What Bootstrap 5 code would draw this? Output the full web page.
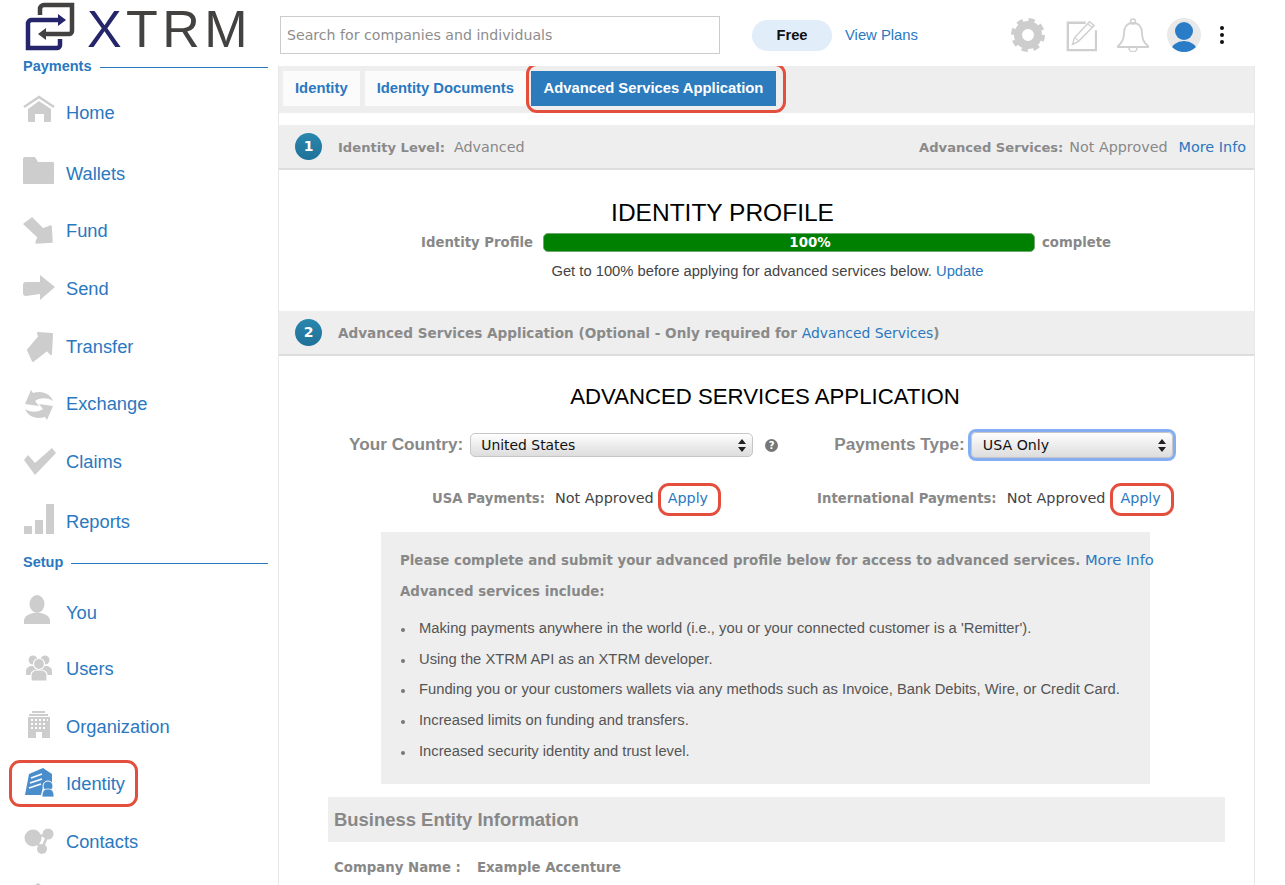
<!DOCTYPE html>
<html lang="en">
<head>
<meta charset="utf-8">
<title>XTRM Identity</title>
<link href="https://cdn.jsdelivr.net/npm/bootstrap@5.3.0/dist/css/bootstrap.min.css" rel="stylesheet">
<style>
html,body{height:885px;overflow:hidden;background:#fff}
body{font-family:"Liberation Sans",Arial,sans-serif;color:#333;font-size:14.7px}
a{text-decoration:none;color:#2a78bf}
.shell{height:885px;width:1285px;overflow:hidden}
.leftcol{width:278px;height:885px;overflow:hidden;flex:none;padding-left:23px;padding-right:10px}
.logo-box{height:58px;margin-left:2px}
.logo-box svg{display:block;flex:none}
.logo-word{font-family:"Liberation Sans",sans-serif;font-weight:400;font-size:52px;line-height:40px;height:40px;margin:9px 0 0 10px;letter-spacing:4.4px;color:#444240;white-space:nowrap}
.logo-word span{color:#24256b}
.sec-head{font-weight:700;font-size:14.5px;color:#2a78bf;line-height:16px;height:16px}
.sec-head i{flex:1;height:1px;background:#2a78bf;margin-left:8px;margin-top:2px;display:block}
.sec-setup{margin-top:0}
.nav-line{font-size:18.3px;line-height:34px;color:#2a78bf;position:relative}
.nav-line svg{width:34px;height:34px;margin-left:-2px;margin-right:11px;flex:none;overflow:visible;fill:#cdcdcd}
.rh-49{height:49px}.rh-56{height:56px}.rh-57{height:57px}.rh-58{height:58px}.rh-60{height:60px}.rh-61{height:61px}
.first-pay{margin-top:22px}.first-set{margin-top:26px}
.rightcol{width:978px;flex:none}
.topbar{height:66px;padding:4px 0 0 2px}
.searchbox{width:440px;height:38px;border:1px solid #ccc;border-radius:0;padding:0 6px;font-family:"DejaVu Sans",sans-serif;font-size:14.15px;color:#888;background:#fff}
.searchbox::placeholder{color:#8d8d8d;opacity:1}
.free-pill{width:80px;height:31px;background:#e1eefa;border-radius:16px;font-weight:700;font-size:14.7px;color:#111;margin-left:32px;padding:0}
.plans{font-size:14.8px;margin-left:13px}
.topicons{margin-left:93px}
.tp-a{margin-left:20px}.tp-b{margin-left:18px}
.mainpane{border-left:1px solid #e8e8e8;border-right:1px solid #e8e8e8;height:819px;overflow:hidden;width:977px}
.tabbar{background:#eee;height:47px;padding:5px 0 0 4px;gap:5px}
.tabbtn{height:35px;background:#fbfbfb;color:#2a78bf;font-weight:700;font-size:14.8px;padding:0 12px;line-height:35px;border:0;border-radius:0}
.tabbtn.on{background:#2c7bbd;color:#fff;position:relative;width:245px;text-align:center;padding:0}
.redmark{position:relative}
.redmark::after{content:"";position:absolute;border:3.5px solid #e34f3c;border-radius:11px;pointer-events:none}
.tabbtn.redmark::after{inset:-8px -10px -7px -5px}
.step-bar{background:#eee;height:45px;border-bottom:2px solid #ddd;margin-top:12px;padding:0 8px 0 16px;font-family:"DejaVu Sans",sans-serif;font-size:14.3px;color:#888;width:975px}
.step-bar>span:not(.step-no){padding-top:2px}
.step-no{width:27px;height:27px;border-radius:50%;background:linear-gradient(#2a86ae,#1f7299);color:#fff;font-weight:700;font-size:14px;margin-right:16px}
.step-bar b{font-weight:700;color:#8a8a8a;font-size:13.1px;margin-right:6px}
.step-bar b.lv{margin-right:9px}
.step-bar b.wide{font-size:13.6px;margin-right:0}
.step-bar b.wide a{font-weight:400;font-size:13.9px}
.step-bar .lnk{font-size:14.4px;margin-left:11px}
.ttl{line-height:28px;color:#000;text-align:center;margin:0;font-weight:400}
.ttl-a{font-size:24.5px;margin-top:29px;width:887px}
.ttl-b{font-size:22.2px;margin-top:27px;width:972px}
.prow{width:975px;height:20px;margin-top:5px;font-family:"DejaVu Sans",sans-serif;font-size:13.25px;color:#888;font-weight:700}
.prow>span{padding-top:2px}
.prow .lab{width:254px;text-align:right;margin-right:10px}
.bar-track{width:492px;height:19px;background:green;border:1px solid #6fa96f;border-radius:5px;color:#fff;font-size:13.4px;line-height:17px;text-align:center;padding-left:42px}
.prow .end{margin-left:7px}
.get-line{text-align:center;margin:8px 0 0;height:51px;line-height:22px;font-size:14.75px;width:977px;color:#444}
.ctl-row{height:50px;margin-top:9px}
.lbl{font-weight:700;font-size:17.2px;color:#888}
.lbl-a{margin-left:70px}.lbl-b{margin-left:56px}
.macsel{height:24px;padding:0 10px;border:1px solid #c6c6c6;border-radius:5px;font-family:"DejaVu Sans",sans-serif;font-size:14.2px;color:#111;line-height:22px;box-shadow:none;background-color:#f2f2f2;background-image:url("data:image/svg+xml,%3Csvg xmlns='http://www.w3.org/2000/svg' width='8' height='13'%3E%3Cpath d='M4 0 8 5H0zM4 13 0 8h8z' fill='%23222'/%3E%3C/svg%3E"),linear-gradient(#fff,#f0f0f0 40%,#ddd);background-repeat:no-repeat;background-position:right 6px center,0 0;background-size:8px 13px,100% 100%}
.macsel:focus{box-shadow:none}
.macsel.cty{width:283px;margin-left:7px;font-size:13.9px}
.macsel.ptp{width:202px;height:26px;margin-left:6px;padding-left:11px;outline:3px solid #85aef2;outline-offset:0;border-radius:5px}
.qmark{width:13px;height:13px;border-radius:50%;background:#777;color:#fff;font-size:10px;font-weight:700;line-height:13px;text-align:center;margin-left:12px;font-family:"DejaVu Sans",sans-serif}
.pay-row{font-family:"DejaVu Sans",sans-serif;font-size:14.4px;color:#444;height:30px;margin-top:14px}
.pay-row b{color:#888;font-weight:700;margin-right:10px;font-size:13.2px}
.pay-row a{position:relative;margin-left:14px;font-size:14.3px}
.pay-row a.apply-b{margin-left:15px}
.pay-row a::after{inset:-5px -13px -6px -10px}
.pay-a{margin-left:153px}.pay-b{margin-left:109px}
.info-box{width:769px;height:252px;background:#eee;margin:18px 0 0 102px;padding:17px 0 0 19px;font-size:14.75px}
.info-box p{margin:0;font-family:"DejaVu Sans",sans-serif;font-weight:700;color:#888;font-size:13.35px;line-height:22px;height:32px;white-space:nowrap}
.info-box p a{font-weight:400;font-size:14.7px}
.info-box p.tall{height:33px}
.info-box ul{margin:4px 0 0;padding-left:15px;list-style:disc}
.info-box li{height:30.7px;line-height:20px;color:#555;padding-left:4px}
.info-box li::marker{font-size:12px;color:#777}
.biz-head{width:897px;height:45px;background:#eee;margin:13px 0 0 49px;padding-left:6px;font-weight:700;font-size:18.45px;color:#888;line-height:45px}
.co-line{margin:16px 0 0 55px;font-family:"DejaVu Sans",sans-serif;font-weight:700;color:#888;font-size:13.3px;line-height:20px}
.co-line span{margin-left:16px}
.nav-line.redmark::after{left:-14px;top:-7px;width:129px;height:47px}
.act-ico{fill:#4a8dcb !important}
</style>
</head>
<body>
<div class="shell d-flex">
  <aside class="leftcol">
    <div class="logo-box d-flex">
      <svg width="52" height="54" viewBox="0 0 52 54">
        <path d="M35 39v6a3 3 0 0 1-3 3H3V23a4 4 0 0 1 4-3H33" fill="none" stroke="#24256b" stroke-width="4.500"/>
        <path d="M33 14l8 6-8 6z" fill="#24256b"/>
        <path d="M15 15V9a4 4 0 0 1 4-4H47V31a3 3 0 0 1-3 3H20" fill="none" stroke="#444240" stroke-width="4.500"/>
        <path d="M21 28l-8 6 8 6z" fill="#444240"/>
      </svg>
      <div class="logo-word"><span>X</span>TRM</div>
    </div>
    <div class="sec-head d-flex align-items-center">Payments<i></i></div>
    <div class="nav-line d-flex rh-61 first-pay"><svg viewBox="0 0 34 34"><path d="M3 11 18 1l15 10" fill="none" stroke="#cdcdcd" stroke-width="2.500"/><path d="M7 13 18 5l12 8v12a1 1 0 0 1-1 1h-6v-8h-9v8H8a1 1 0 0 1-1-1z"/></svg>Home</div>
    <div class="nav-line d-flex rh-57"><svg viewBox="0 0 34 34"><path d="M2 2a2 2 0 0 1 2-2h10l3 5h15a1 1 0 0 1 1 1v20a1 1 0 0 1-1 1H3a1 1 0 0 1-1-1z"/></svg>Wallets</div>
    <div class="nav-line d-flex rh-58"><svg viewBox="0 0 34 34"><path d="M3 10l8-6 11 11 8-3 1 16-16 1 2-6z" stroke="#cdcdcd" stroke-width="1.500" stroke-linejoin="round"/></svg>Fund</div>
    <div class="nav-line d-flex rh-58"><svg viewBox="0 0 34 34"><path d="M4 10h15V3l15 12-15 13v-6L5 24a3 3 0 0 1-3-3v-8a3 3 0 0 1 2-3z"/></svg>Send</div>
    <div class="nav-line d-flex rh-57"><svg viewBox="0 0 34 34"><path d="M7 20 18 7l-1-4 14 1-1 20-4-4-14 11z" stroke="#cdcdcd" stroke-width="2" stroke-linejoin="round"/></svg>Transfer</div>
    <div class="nav-line d-flex rh-58"><svg viewBox="0 0 34 34"><path d="M10 3 4 17l14 2-4-5c4-3 12-4 18 0C29 7 22 3 12 6z"/><path d="M26 33l6-14-14-2 4 5c-4 3-12 4-18 0 3 7 10 11 20 8z"/></svg>Exchange</div>
    <div class="nav-line d-flex rh-60"><svg viewBox="0 0 34 34"><path d="M3 15l4-5 7 8L31 3l4 5-21 22z"/></svg>Claims</div>
    <div class="nav-line d-flex rh-49"><svg viewBox="0 0 34 34"><path d="M3 21h8v8H3zM14 15h8v14h-8zM25-1h8v30h-8z"/></svg>Reports</div>
    <div class="sec-head d-flex align-items-center sec-setup">Setup<i></i></div>
    <div class="nav-line d-flex rh-56 first-set"><svg viewBox="0 0 34 34"><ellipse cx="16" cy="8" rx="7.500" ry="9"/><path d="M3 28v-3c0-5 5-7 9-8h8c4 1 9 3 9 8v3z"/></svg>You</div>
    <div class="nav-line d-flex rh-58"><svg viewBox="0 0 34 34"><circle cx="12" cy="8" r="4.500"/><circle cx="24" cy="8" r="4.500"/><path d="M5 23v-4c0-3 3-5 6-5h14c3 0 6 2 6 5v4z"/><circle cx="18" cy="12" r="5.500" stroke="#fff" stroke-width="1.200"/><path d="M10 29v-6c0-3 3-5 6-5h4c3 0 6 2 6 5v6z" stroke="#fff" stroke-width="1.200"/></svg>Users</div>
    <div class="nav-line d-flex rh-57"><svg viewBox="0 0 34 34"><path d="M11 1h13v2H11zM8 4h19v2H8zM7 7h22v21h-8v-6h-6v6H7z"/><path d="M10 9h2v2h-2zM14 9h2v2h-2zM18 9h2v2h-2zM22 9h2v2h-2zM26 9h1v2h-1zM10 13h2v2h-2zM14 13h2v2h-2zM18 13h2v2h-2zM22 13h2v2h-2zM10 17h2v2h-2zM14 17h2v2h-2zM18 17h2v2h-2zM22 17h2v2h-2z" fill="#fff"/></svg>Organization</div>
    <div class="nav-line d-flex rh-58 redmark"><svg class="act-ico" viewBox="0 0 34 34"><path d="M4 28 8 7 22 1l9 6v10l-9 3-2 8z"/><path d="M10 11l11-4M9 16l12-4M8 21l12-4" stroke="#fff" stroke-width="1.700"/><circle cx="27" cy="19" r="5" stroke="#fff"/><path d="M21 30c0-6 2-8 6-8s6 2 6 8z" stroke="#fff" stroke-width=".8"/></svg>Identity</div>
    <div class="nav-line d-flex rh-58"><svg viewBox="0 0 34 34"><circle cx="12" cy="13" r="8.500"/><circle cx="27" cy="9" r="5.500"/><circle cx="21" cy="24" r="5"/><path d="M12 13l15-4-6 15z" fill="none" stroke="#cdcdcd" stroke-width="2.500"/></svg>Contacts</div>
    <div class="nav-line d-flex rh-58"><svg viewBox="0 0 34 34"><path d="M17 0 4 9v20h26V9z"/></svg></div>
  </aside>
  <div class="rightcol">
    <header class="topbar d-flex align-items-center">
      <input class="searchbox" type="text" placeholder="Search for companies and individuals" aria-label="Search">
      <button class="btn free-pill" type="button">Free</button>
      <a class="plans" href="#">View Plans</a>
      <div class="topicons d-flex align-items-center">
        <svg width="34" height="34" viewBox="0 0 34 34"><circle cx="17" cy="17" r="10" fill="none" stroke="#cdcdcd" stroke-width="8"/><circle cx="17" cy="17" r="14.500" fill="none" stroke="#cdcdcd" stroke-width="5" stroke-dasharray="6 5.390"/></svg>
        <svg class="tp-a" width="32" height="34" viewBox="0 0 34 34"><path d="M22 4H3v29h30V12" fill="none" stroke="#cfcfcf" stroke-width="2.500"/><path d="M8 27l2-7L26 3l5 4-17 17z" fill="#fff" stroke="#cfcfcf" stroke-width="1.500"/><path d="M24 5l5 4M11 20l3 3" stroke="#cfcfcf" stroke-width="1.200"/></svg>
        <svg class="tp-a" width="32" height="34" viewBox="0 0 32 34"><path d="M16 5c-6 0-9 4-9 10 0 6-2 10-6 13v1h30v-1c-4-3-6-7-6-13 0-6-3-10-9-10z" fill="none" stroke="#cfcfcf" stroke-width="1.800"/><circle cx="16" cy="3.500" r="2.500" fill="none" stroke="#cfcfcf" stroke-width="1.500"/><path d="M12 30a4 4 0 0 0 8 0" fill="none" stroke="#cfcfcf" stroke-width="1.500"/></svg>
        <svg class="tp-b" width="34" height="34" viewBox="0 0 34 34"><defs><clipPath id="av"><circle cx="17" cy="17" r="17"/></clipPath></defs><circle cx="17" cy="17" r="17" fill="#e9e9e9"/><g clip-path="url(#av)" fill="#2a7cc6"><circle cx="17" cy="13" r="9"/><ellipse cx="17" cy="33" rx="13" ry="10"/></g></svg>
        <svg class="tp-b" width="6" height="20" viewBox="0 0 6 20" fill="#111"><circle cx="3" cy="3" r="2"/><circle cx="3" cy="10" r="2"/><circle cx="3" cy="17" r="2"/></svg>
      </div>
    </header>
    <main class="mainpane">
      <nav class="tabbar d-flex">
        <a class="tabbtn" href="#">Identity</a>
        <a class="tabbtn" href="#">Identity Documents</a>
        <a class="tabbtn on redmark" href="#">Advanced Services Application</a>
      </nav>
      <div class="step-bar d-flex align-items-center">
        <span class="step-no d-flex align-items-center justify-content-center">1</span>
        <span><b class="lv">Identity Level:</b>Advanced</span>
        <span class="ms-auto"><b>Advanced Services:</b>Not Approved<a class="lnk" href="#">More Info</a></span>
      </div>
      <h2 class="ttl ttl-a">IDENTITY PROFILE</h2>
      <div class="prow d-flex align-items-center">
        <span class="lab">Identity Profile</span>
        <div class="bar-track">100%</div>
        <span class="end">complete</span>
      </div>
      <p class="get-line">Get to 100% before applying for advanced services below. <a href="#">Update</a></p>
      <div class="step-bar d-flex align-items-center mt-0">
        <span class="step-no d-flex align-items-center justify-content-center">2</span>
        <span><b class="wide">Advanced Services Application (Optional - Only required for <a href="#">Advanced Services</a>)</b></span>
      </div>
      <h2 class="ttl ttl-b">ADVANCED SERVICES APPLICATION</h2>
      <div class="ctl-row d-flex align-items-center">
        <span class="lbl lbl-a">Your Country:</span>
        <select class="macsel cty form-select" aria-label="Your Country"><option>United States</option></select>
        <span class="qmark">?</span>
        <span class="lbl lbl-b">Payments Type:</span>
        <select class="macsel ptp form-select" aria-label="Payments Type"><option>USA Only</option></select>
      </div>
      <div class="pay-row d-flex align-items-center">
        <span class="pay-a"><b>USA Payments:</b>Not Approved</span>
        <a class="redmark" href="#">Apply</a>
        <span class="pay-b"><b>International Payments:</b>Not Approved</span>
        <a class="redmark apply-b" href="#">Apply</a>
      </div>
      <section class="info-box">
        <p>Please complete and submit your advanced profile below for access to advanced services. <a href="#">More Info</a></p>
        <p class="tall">Advanced services include:</p>
        <ul>
          <li>Making payments anywhere in the world (i.e., you or your connected customer is a 'Remitter').</li>
          <li>Using the XTRM API as an XTRM developer.</li>
          <li>Funding you or your customers wallets via any methods such as Invoice, Bank Debits, Wire, or Credit Card.</li>
          <li>Increased limits on funding and transfers.</li>
          <li>Increased security identity and trust level.</li>
        </ul>
      </section>
      <div class="biz-head">Business Entity Information</div>
      <div class="co-line">Company Name :<span>Example Accenture</span></div>
    </main>
  </div>
</div>
<script src="https://cdn.jsdelivr.net/npm/bootstrap@5.3.0/dist/js/bootstrap.bundle.min.js"></script>
</body>
</html>
